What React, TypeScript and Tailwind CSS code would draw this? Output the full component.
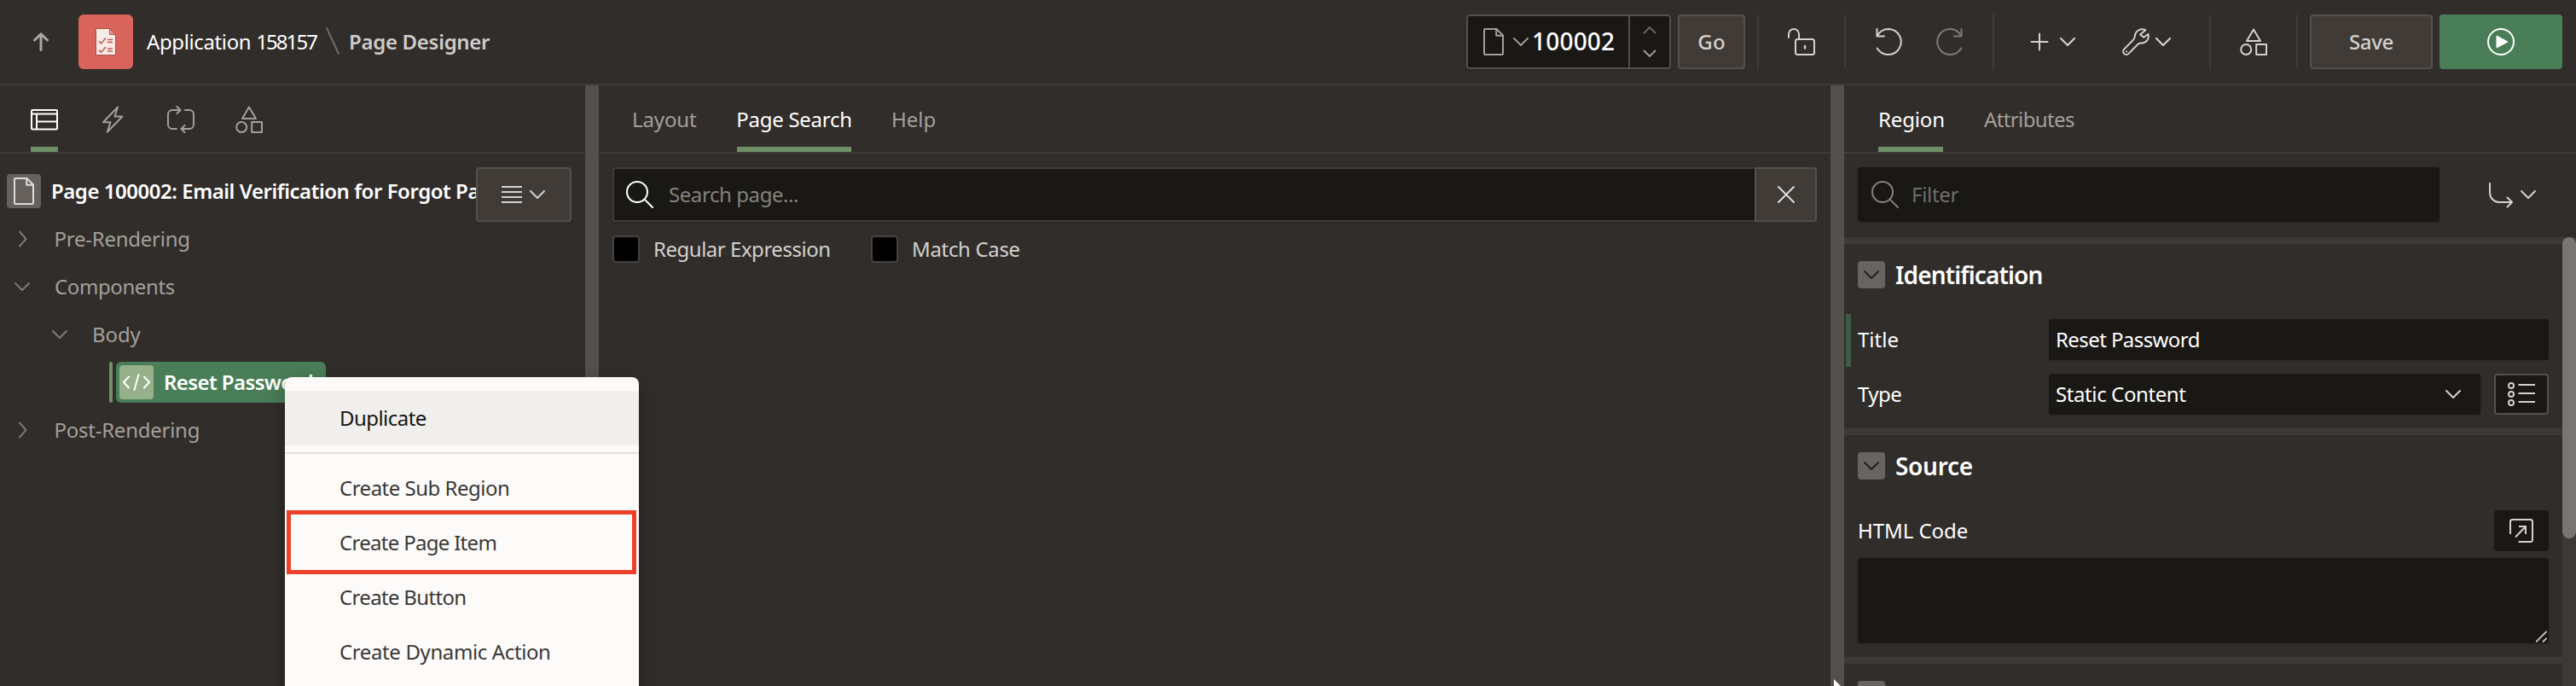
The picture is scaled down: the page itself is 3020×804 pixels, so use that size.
import React from "react";

type IconProps = { className?: string };

const Chevron = ({ className = "", w = 1.8 }: IconProps & { w?: number }) => (
  <svg viewBox="0 0 20 12" className={`shrink-0 h-3 w-5 ${className}`} fill="none" stroke="currentColor" strokeWidth={w} strokeLinecap="round" strokeLinejoin="round">
    <path d="M2 2l8 8 8-8" />
  </svg>
);

const ChevronRight = () => (
  <svg viewBox="0 0 12 20" className="h-5 w-3 shrink-0" fill="none" stroke="currentColor" strokeWidth="1.9" strokeLinecap="round">
    <path d="M2 1.5l7.5 8.5L2 18.5" />
  </svg>
);

const Doc = ({ className = "" }: IconProps) => (
  <svg viewBox="0 0 24 32" className={`h-8 w-6 shrink-0 ${className}`} fill="none" stroke="currentColor" strokeWidth="2" strokeLinejoin="round">
    <path d="M1 2.2Q1 1 2.2 1H15.5L23 8.5V29.8Q23 31 21.8 31H2.2Q1 31 1 29.8Z" />
    <path d="M15.2 1.5V8.8H22.5" />
  </svg>
);

const Shapes = ({ className = "" }: IconProps) => (
  <svg viewBox="0 0 32 32" className={`size-8 shrink-0 ${className}`} fill="none" stroke="currentColor" strokeWidth="2" strokeLinejoin="round">
    <path d="M16 1.6L24 15H8Z" />
    <circle cx="7.2" cy="25" r="6" />
    <path d="M19.2 19H31V31H19.2Z" />
  </svg>
);

const Magnifier = ({ className = "" }: IconProps) => (
  <svg viewBox="0 0 32 32" className={`size-8 shrink-0 ${className}`} fill="none" stroke="currentColor" strokeWidth="2" strokeLinecap="round">
    <circle cx="13" cy="13" r="12" />
    <path d="M21.6 21.6L31 31" />
  </svg>
);

const Separator = () => <div className="h-16 w-0.5 shrink-0 bg-[#403c38]" />;

function Header() {
  return (
    <header className="flex h-[100px] shrink-0 items-center border-b-2 border-[#3f3b38] text-[#d4d1ce]">
      <svg viewBox="0 0 20 22" className="ml-[38px] h-[22px] w-5 text-[#a9a6a3]" fill="none" stroke="currentColor" strokeWidth="3" strokeLinecap="round" strokeLinejoin="round">
        <path d="M10 20.5V2M2.5 9L10 1.8L17.5 9" />
      </svg>
      <div className="ml-[34px] flex size-16 items-center justify-center rounded-md bg-[#d9645b]">
        <svg viewBox="0 0 24 32" className="h-8 w-6" fill="none" strokeLinejoin="round">
          <path d="M.5 .5H16.5L23.5 7.5V31.5H.5Z" fill="#f7ebe8" stroke="#b04f48" />
          <path d="M16.5 .5V7.5H23.5Z" fill="#e3978f" stroke="#b04f48" />
          <path d="M4 15l2.6 3L12 11.5M4 25.5l2.6 3L12 22M14 13.5h6M14 16.500h6M14 24h6M14 27h6" stroke="#c4564e" strokeWidth="1.4" />
        </svg>
      </div>
      <div className="ml-4 w-[208px] whitespace-nowrap text-white">
        <span className="tracking-[-0.38px]">Application </span>
        <span className="tracking-[-1.9px]">158157</span>
      </div>
      <svg viewBox="0 0 16 32" className="-mt-0.5 ml-[2px] h-8 w-4 text-[#6f6b67]" fill="none" stroke="currentColor" strokeWidth="2" strokeLinecap="round">
        <path d="M1 1L15 31" />
      </svg>
      <div className="ml-[11px] font-semibold tracking-[-0.3px] text-[#cfccca]">Page Designer</div>

      <div className="ml-auto flex h-16 w-60 items-stretch rounded border-2 border-[#54504b] bg-[#191815] shadow-sm">
        <div className="flex flex-1 items-center pl-[18px]">
          <Doc className="text-[#a3a09c]" />
          <Chevron className="ml-2.5 text-[#a3a09c]" />
          <span className="ml-[3px] text-[28px] font-medium tracking-[0.2px] text-white">100002</span>
        </div>
        <div className="flex w-12 flex-col items-center justify-between border-l-2 border-[#54504b] py-[11px]">
          <svg viewBox="0 0 16 10" className="h-2.5 w-4 text-[#6f6b67]" fill="none" stroke="currentColor" strokeWidth="1.8" strokeLinecap="round"><path d="M1.5 8.5L8 2l6.500 6.500" /></svg>
          <svg viewBox="0 0 16 10" className="h-2.5 w-4 text-[#a3a09c]" fill="none" stroke="currentColor" strokeWidth="1.8" strokeLinecap="round"><path d="M1.5 1.5L8 8l6.500-6.500" /></svg>
        </div>
      </div>
      <button className="ml-2 mr-3.5 h-16 w-[79px] rounded border-2 border-[#54504b] bg-[#403b37] font-medium tracking-[0.3px]">Go</button>
      <Separator />
      <svg viewBox="0 0 32 32" className="mx-[34px] size-8" fill="none" stroke="currentColor" strokeWidth="2" strokeLinecap="round">
        <path d="M1 11V7a6 6 0 0 1 12 0v6" />
        <rect x="9" y="13" width="22" height="18" rx="2.5" />
        <path d="M20 21v2.5" strokeWidth="2.4" />
      </svg>
      <Separator />
      <svg viewBox="0 0 32 32" className="ml-[35px] size-8" fill="none" stroke="currentColor" strokeWidth="2" strokeLinecap="round" strokeLinejoin="round">
        <path d="M1.5 1v8.500h8.500" />
        <path d="M1.8 9C4.500 4 9.600 1 15.200 1a15 15 0 1 1-13.500 22.500" />
      </svg>
      <svg viewBox="0 0 32 32" className="ml-[38px] mr-[35px] size-8 text-[#7f7b77]" fill="none" stroke="currentColor" strokeWidth="2" strokeLinecap="round" strokeLinejoin="round">
        <path d="M30.5 1v8.500h-8.500" />
        <path d="M30.200 9C27.500 4 22.400 1 16.800 1a15 15 0 1 0 13.500 22.500" />
      </svg>
      <Separator />
      <div className="ml-[42px] flex items-center gap-3">
        <svg viewBox="0 0 22 22" className="size-[22px]" fill="none" stroke="currentColor" strokeWidth="2" strokeLinecap="round"><path d="M11 1.500v19M1.500 11h19" /></svg>
        <Chevron w={2.2} />
      </div>
      <div className="ml-[54px] mr-11 flex items-center gap-1.5">
        <svg viewBox="0 0 32 32" className="size-8" fill="none" stroke="currentColor" strokeWidth="2" strokeLinecap="round" strokeLinejoin="round">
          <path d="M27.300 2.200C22-.1 15.500 2.800 14.800 9.500C14.700 11.500 14 12.800 12.500 14.200L2.200 24.600a3.700 3.700 0 0 0 5.300 5.300L18.500 18.800C19.800 17.500 21 17.700 23 17.500C28.500 17 32 12.500 30.500 7L25.300 10.800L21.200 7.400Z" />
          <path d="M5 27.200v.2" />
        </svg>
        <Chevron w={2.2} />
      </div>
      <Separator />
      <Shapes className="mx-[34px]" />
      <Separator />
      <button className="ml-3.5 h-16 w-36 rounded border-2 border-[#54504b] bg-[#403b37] font-medium tracking-[-0.36px]">Save</button>
      <button className="ml-2 mr-4 flex h-16 w-36 items-center justify-center rounded bg-[#4a7e58] text-white">
        <svg viewBox="0 0 32 32" className="size-8" fill="none" stroke="currentColor" strokeWidth="2">
          <circle cx="16" cy="16" r="15" />
          <path d="M11 9L24 16L11 23Z" fill="currentColor" strokeWidth="1" strokeLinejoin="round" />
        </svg>
      </button>
    </header>
  );
}

function PagePanel() {
  return (
    <section className="flex w-[686px] shrink-0 flex-col">
      <nav className="flex h-20 shrink-0 gap-12 border-b-2 border-[#3f3b38] pl-9 text-[#a3a09c]">
        <div className="flex w-8 items-center border-b-[6px] border-[#6f8f66] pt-2 text-white">
          <svg viewBox="0 0 32 26" className="h-[26px] w-8" fill="none" stroke="currentColor" strokeWidth="2"><rect x="1" y="2" width="30" height="22.500" rx="1" /><path d="M1 6.500H31M7 6.500V24M7 15.500H31" /></svg>
        </div>
        <svg viewBox="0 0 32 32" className="mt-6 size-8" fill="none" stroke="currentColor" strokeWidth="2" strokeLinejoin="round"><path d="M22 1.500L5 19.200H13.500L9.800 30.800L27.500 12.500H18.500Z" /></svg>
        <svg viewBox="0 0 32 32" className="mt-6 size-8" fill="none" stroke="currentColor" strokeWidth="2" strokeLinecap="round" strokeLinejoin="round">
          <path d="M11 27H6a5 5 0 0 1-5-5V10a5 5 0 0 1 5-5h9M11.500 1l4 4-4 4M21 5h5a5 5 0 0 1 5 5v12a5 5 0 0 1-5 5h-9M20.500 23l-4 4 4 4" />
        </svg>
        <Shapes className="mt-6" />
      </nav>
      <div className="flex flex-col pt-4 text-[#a3a09c]">
        <div className="flex h-14">
          <div className="flex w-[558px] items-center overflow-hidden pl-2">
            <div className="flex size-10 shrink-0 items-center justify-center rounded bg-[#67615d]"><Doc className="text-[#dedcda]" /></div>
            <span className="ml-3 whitespace-nowrap font-semibold tracking-[-0.47px] text-white">Page 100002: Email Verification for Forgot Password</span>
          </div>
          <button className="flex h-16 w-28 shrink-0 items-center justify-center gap-2 rounded border-2 border-[#54504b] bg-[#403b37] text-[#d4d1ce]">
            <svg viewBox="0 0 24 22" className="h-[22px] w-6" stroke="currentColor" strokeWidth="2"><path d="M0 2h24M0 8h24M0 14h24M0 20h24" /></svg>
            <Chevron w={2} />
          </button>
        </div>
        <div className="flex h-14 items-center pl-[21px]"><span className="text-[#7f7b77]"><ChevronRight /></span><span className="ml-[30.5px] tracking-[-0.25px]">Pre-Rendering</span></div>
        <div className="flex h-14 items-center pl-4"><Chevron className="text-[#7f7b77]" w={2} /><span className="ml-7 tracking-[-0.4px]">Components</span></div>
        <div className="flex h-14 items-center pl-[60px]"><Chevron className="text-[#7f7b77]" w={2} /><span className="ml-7 tracking-[-0.1px]">Body</span></div>
        <div className="flex h-14 items-center pl-32">
          <div className="h-12 w-1 rounded-sm bg-[#6f8f66]" />
          <div className="ml-1 flex h-12 w-[246px] items-center rounded-md bg-[#4a7e58] pl-1 text-white">
            <div className="flex size-10 shrink-0 items-center justify-center rounded bg-[#96b08a]">
              <svg viewBox="0 0 32 20" className="h-5 w-8" fill="none" stroke="currentColor" strokeWidth="2" strokeLinecap="round" strokeLinejoin="round"><path d="M7 3.500L1 10l6 6.500M25 3.500L31 10l-6 6.500M18.500 1L13.500 19" /></svg>
            </div>
            <span className="ml-3 whitespace-nowrap font-semibold tracking-[-0.59px]">Reset Password</span>
          </div>
        </div>
        <div className="flex h-14 items-center pl-[21px]"><span className="text-[#7f7b77]"><ChevronRight /></span><span className="ml-[30.5px] tracking-[-0.25px]">Post-Rendering</span></div>
      </div>
    </section>
  );
}

function Checkbox({ children }: { children: React.ReactNode }) {
  return (
    <label className="flex items-center text-[#d4d1ce]">
      <span className="mr-4 size-8 rounded border-2 border-[#45433f] bg-black" />
      {children}
    </label>
  );
}

function SearchPanel() {
  return (
    <section className="flex w-[1444px] shrink-0 flex-col">
      <nav className="flex h-20 shrink-0 gap-12 border-b-2 border-[#3f3b38] pl-[39px] text-[#a3a09c]">
        <span className="flex w-[75px] items-center pt-0.5 tracking-[-0.13px]">Layout</span>
        <span className="flex w-[134px] items-center justify-center whitespace-nowrap border-b-[6px] border-[#6f8f66] pt-2 tracking-[-0.27px] text-white">Page Search</span>
        <span className="-ml-px flex items-center pt-0.5">Help</span>
      </nav>
      <div className="px-4 pt-4">
        <div className="flex h-16">
          <div className="flex flex-1 items-center rounded-l border-2 border-r-0 border-[#3f3d38] bg-[#191815] pl-3.5 shadow-sm">
            <Magnifier className="text-white" />
            <span className="ml-[18px] tracking-[-0.42px] text-[#85827e]">Search page...</span>
          </div>
          <button className="flex w-[73px] items-center justify-center rounded-r border-2 border-[#54504b] bg-[#403b37] text-[#dedcda]">
            <svg viewBox="0 0 22 22" className="size-[22px]" fill="none" stroke="currentColor" strokeWidth="2" strokeLinecap="round"><path d="M2 2l18 18M20 2L2 20" /></svg>
          </button>
        </div>
        <div className="mt-4 flex h-8 items-center gap-12">
          <Checkbox><span className="w-[207px] whitespace-nowrap tracking-[-0.48px]">Regular Expression</span></Checkbox>
          <Checkbox><span className="tracking-[-0.34px]">Match Case</span></Checkbox>
        </div>
      </div>
    </section>
  );
}

function GroupTitle({ children }: { children?: React.ReactNode }) {
  return (
    <div className="flex items-center gap-3 pl-4 pt-5">
      <span className="flex size-8 items-center justify-center rounded bg-[#69645f] text-[#23211e]"><Chevron w={2} /></span>
      {children}
    </div>
  );
}

function PropertyPanel() {
  return (
    <section className="flex w-[858px] shrink-0 flex-col">
      <nav className="flex h-20 shrink-0 gap-12 border-b-2 border-[#3f3b38] pl-10 text-[#a3a09c]">
        <span className="flex w-[76px] items-center border-b-[6px] border-[#6f8f66] pt-2 tracking-[-0.15px] text-white">Region</span>
        <span className="flex items-center pt-0.5 tracking-[-0.62px]">Attributes</span>
      </nav>
      <div className="flex h-[98px] shrink-0 pl-4 pt-4">
        <div className="flex h-16 w-[682px] items-center rounded bg-[#191815] pl-4 text-[#85827e] shadow-sm">
          <Magnifier />
          <span className="ml-[15px] tracking-[-0.3px] text-[#716e6a]">Filter</span>
        </div>
        <div className="ml-[57px] flex h-16 items-center gap-[7px] text-[#d4d1ce]">
          <svg viewBox="0 0 30 32" className="h-8 w-[30px]" fill="none" stroke="currentColor" strokeWidth="2" strokeLinecap="round" strokeLinejoin="round"><path d="M2 3v11a11 11 0 0 0 11 11h14.500M22.500 19.500l5.500 5.500-5.500 5.500" /></svg>
          <Chevron w={2} />
        </div>
      </div>
      <div className="flex min-h-0 flex-1">
        <div className="flex w-[842px] flex-col overflow-hidden text-white">
          <div className="h-[224px] shrink-0 border-t-8 border-[#3d3935]">
            <GroupTitle><h2 className="text-[28px] font-semibold leading-8 tracking-[-0.87px]">Identification</h2></GroupTitle>
            <div className="mt-[30px] flex h-[62px] items-center pl-0.5">
              <div className="h-full w-1.5 bg-[#3f5a44]" />
              <span className="mt-[-2px] ml-2 w-[224px]">Title</span>
              <div className="mt-[-2px] flex h-12 w-[586px] items-center rounded bg-[#191815] pl-2 tracking-[-0.58px] shadow-sm">Reset Password</div>
            </div>
            <div className="mt-2 flex h-12 items-center pl-4">
              <span className="w-[224px] tracking-[-0.5px]">Type</span>
              <div className="flex h-12 w-[506px] items-center justify-between rounded bg-[#191815] pl-2 pr-[22px] tracking-[-0.4px] shadow-sm">Static Content<Chevron className="text-[#d4d1ce]" w={2} /></div>
              <button className="ml-4 flex h-12 w-16 items-center justify-center rounded border-2 border-[#54504b] bg-[#191815] text-[#d4d1ce]">
                <svg viewBox="0 0 32 30" className="h-[30px] w-8" fill="none" stroke="currentColor" strokeWidth="2"><path d="M12.500 4H32M12.500 14H32M12.500 24H32" /><circle cx="4" cy="5" r="3" /><circle cx="4" cy="15" r="3" /><circle cx="4" cy="25" r="3" /></svg>
              </button>
            </div>
          </div>
          <div className="h-[268px] shrink-0 border-t-8 border-[#3d3935]">
            <GroupTitle><h2 className="text-[28px] font-semibold leading-8 tracking-[-0.3px]">Source</h2></GroupTitle>
            <div className="mt-9 flex h-12 items-center justify-between pl-4 pr-4">
              <span className="tracking-[-0.05px]">HTML Code</span>
              <button className="flex h-12 w-16 items-center justify-center rounded bg-[#191815] text-[#d4d1ce]">
                <svg viewBox="0 0 28 28" className="size-7" fill="none" stroke="currentColor" strokeWidth="2"><path d="M1 18V3.500Q1 1 3.500 1H24.500Q27 1 27 3.500V24.500Q27 27 24.500 27H10.500M11 9H19V18M19 9L7 21.500" /></svg>
              </button>
            </div>
            <div className="mx-4 mt-2 flex h-[100px] items-end justify-end rounded bg-[#191815] p-px shadow-sm">
              <svg viewBox="0 0 14 14" className="size-3.5" stroke="#c9c6c3" strokeWidth="1.8"><path d="M0 13.500L12.500 1M8 13.500L12.500 9" /></svg>
            </div>
          </div>
          <div className="h-[34px] shrink-0 border-t-8 border-[#3d3935]"><GroupTitle /></div>
        </div>
        <div className="w-4 bg-[#3d3935]"><div className="h-[353px] w-4 rounded-full bg-[#7b7571]" /></div>
      </div>
    </section>
  );
}

function ContextMenu() {
  const items = [
    { label: "Create Sub Region", tracking: "tracking-[-0.5px]" },
    { label: "Create Page Item", tracking: "tracking-[-0.7px]" },
    { label: "Create Button", tracking: "tracking-[-0.67px]" },
    { label: "Create Dynamic Action", tracking: "tracking-[-0.38px]" },
  ];
  return (
    <div className="absolute left-[334px] top-[442px] h-[380px] w-[415px] rounded-lg bg-[#fcfbfa] pt-4 text-[#3a3734] shadow-[0_8px_24px_rgba(0,0,0,0.3)]">
      <div className="flex h-16 items-center bg-[#f0efed] pl-16 tracking-[-0.55px] text-[#161513]">Duplicate</div>
      <div className="my-2 h-0.5 bg-[#e2e0de]" />
      {items.map((item) => (
        <div key={item.label} className={`flex h-16 items-center pl-16 ${item.tracking}`}>{item.label}</div>
      ))}
      <div className="absolute left-0.5 top-[156px] h-[75px] w-[410px] border-[5px] border-[#ec4128]" />
    </div>
  );
}

export default function App() {
  return (
    <div className="relative flex h-[804px] w-[3020px] flex-col overflow-hidden bg-[#312d2a] font-['Noto_Sans',sans-serif] text-2xl">
      <Header />
      <main className="flex min-h-0 flex-1">
        <PagePanel />
        <div className="w-4 shrink-0 bg-[#54504b]" />
        <SearchPanel />
        <div className="w-4 shrink-0 bg-[#54504b]" />
        <PropertyPanel />
      </main>
      <ContextMenu />
      <svg viewBox="0 0 9 8" className="absolute left-[2150px] top-[796px] h-2 w-[9px]"><path d="M0 0L9 9H0Z" fill="#fff" /></svg>
    </div>
  );
}
